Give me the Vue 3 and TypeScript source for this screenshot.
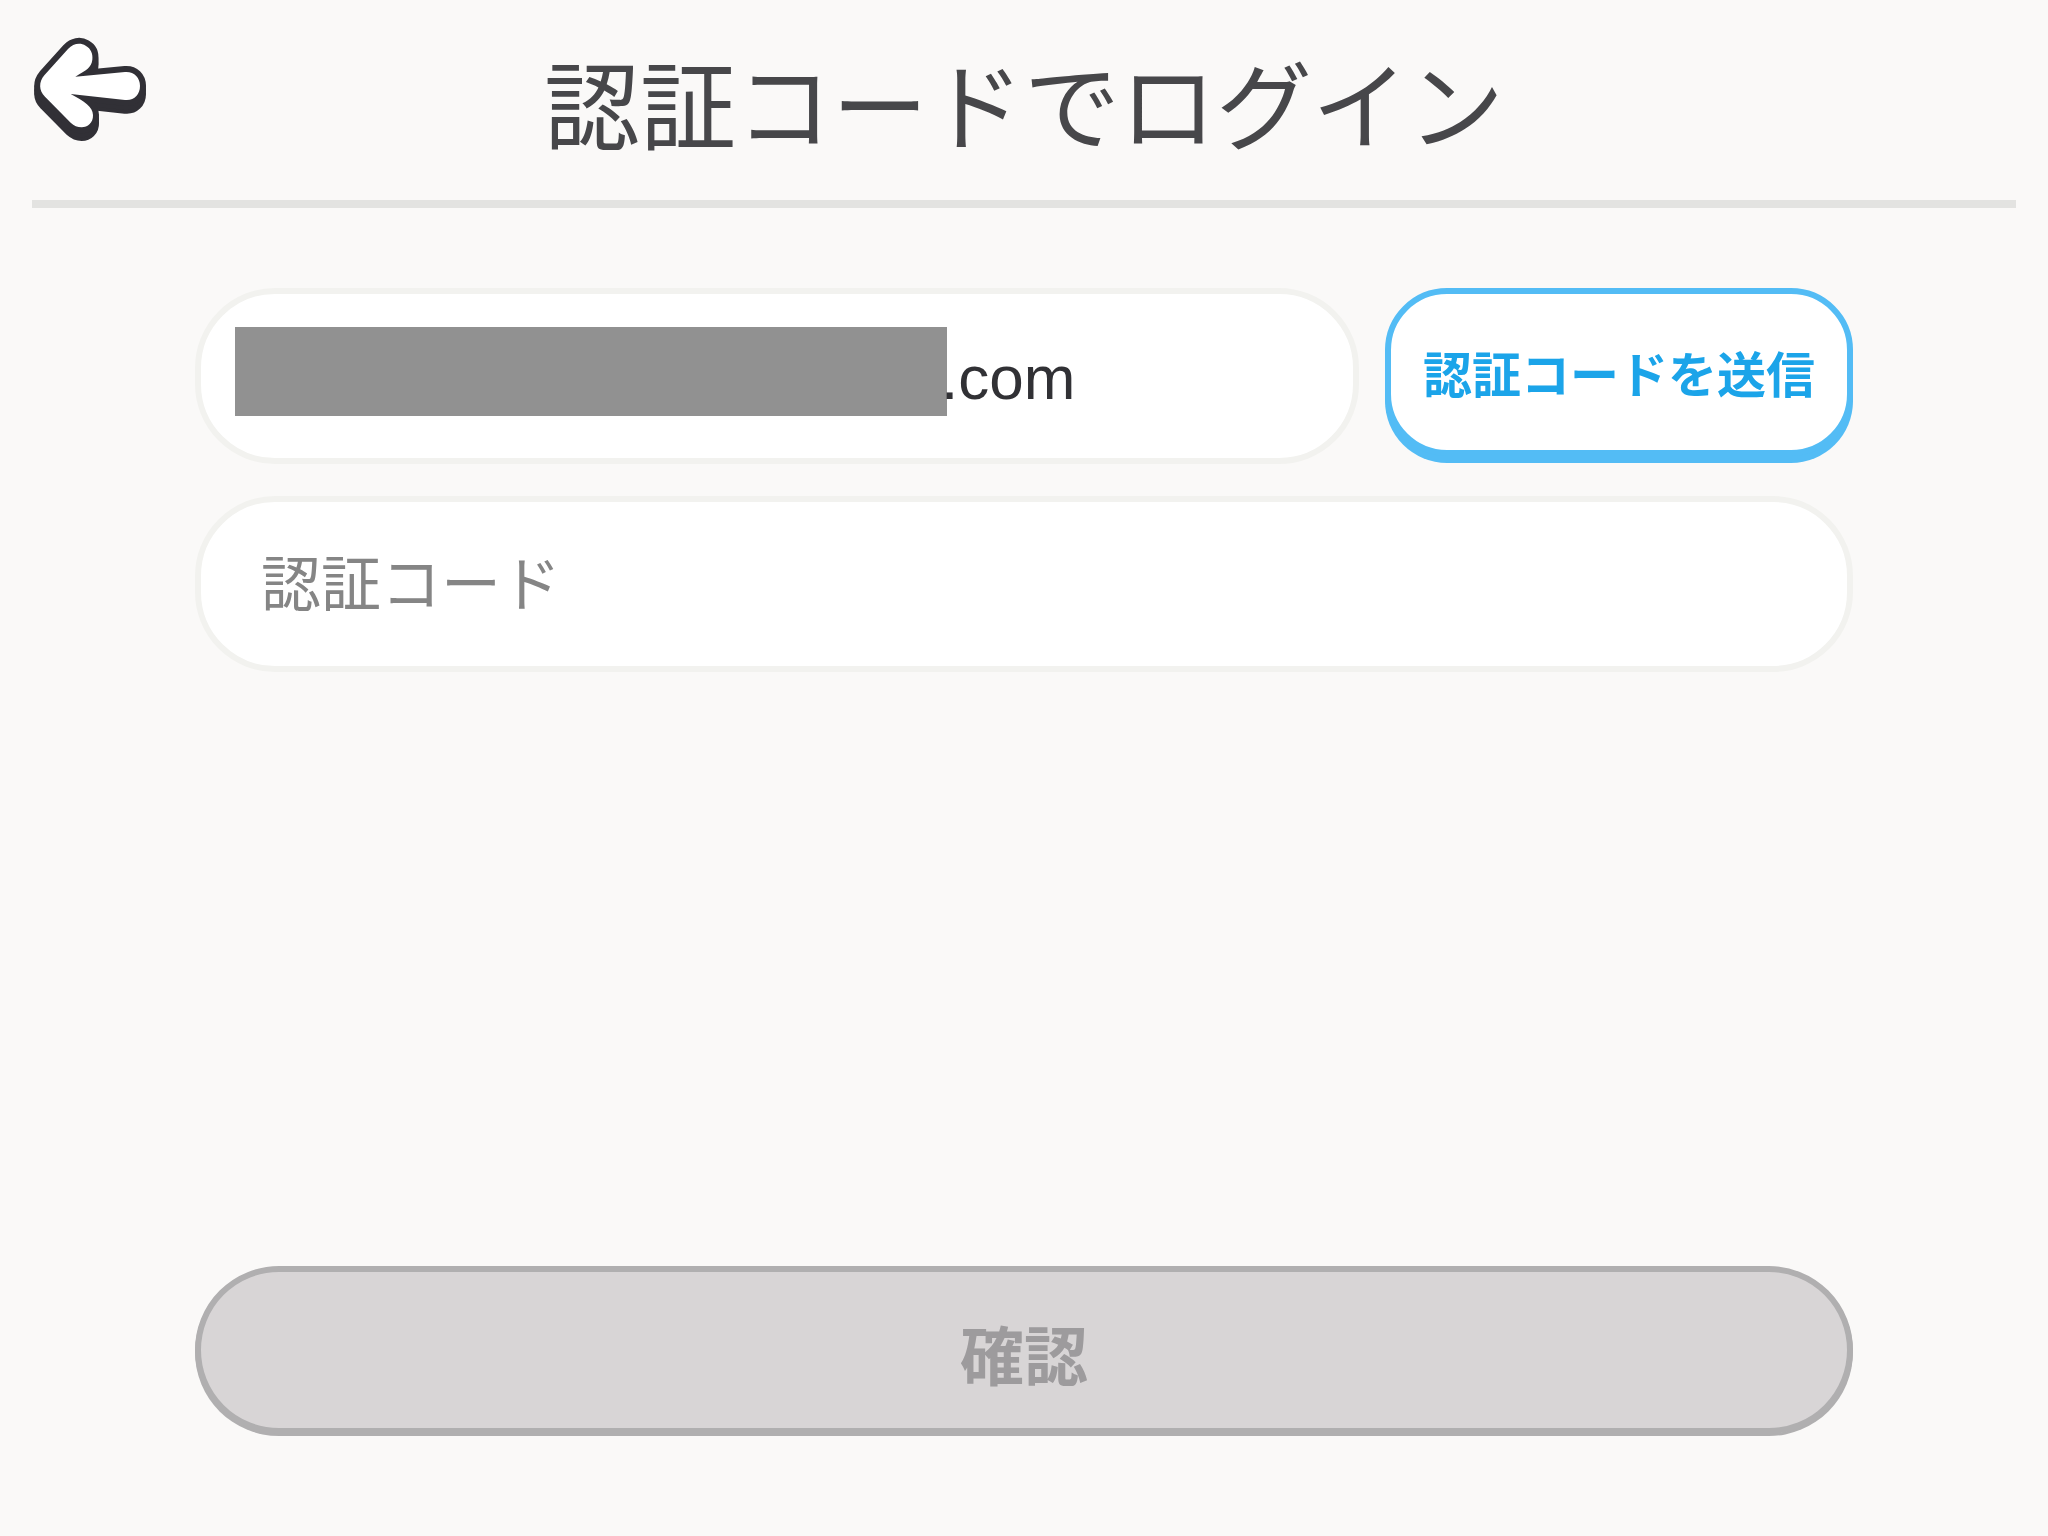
<script setup lang="ts">
import { computed, ref } from 'vue'

const emailDomain = ref('.com')
const code = ref('')
const canConfirm = computed(() => code.value.trim().length > 0)
</script>

<template>
  <div class="page">
    <header class="header">
      <button class="back" type="button" aria-label="戻る">
        <svg class="arrow" viewBox="96 108 348 321" aria-hidden="true">
          <defs>
            <path
              id="arrow-shape"
              d="M204 147C219 131 240 127 257 137C273 146 279 161 277 179C274 203 260 209 226 230L375 216C402 214 420 232 420 258C420 284 402 303 375 300L212 282C254 305 278 320 279 345C280 368 263 382 245 382C232 382 222 377 212 368L135 290C116 272 116 246 133 226Z"
            />
          </defs>
          <use class="arrow-edge" href="#arrow-shape" y="23" />
          <use class="arrow-edge" href="#arrow-shape" y="12" />
          <use class="arrow-edge" href="#arrow-shape" />
          <use class="arrow-face" href="#arrow-shape" />
        </svg>
      </button>
      <h1 class="title">認証コードでログイン</h1>
    </header>

    <form class="form" @submit.prevent>
      <div class="row">
        <label class="field email">
          <span class="mask"></span>
          <input v-model="emailDomain" class="input" type="text" aria-label="メールアドレス" />
        </label>
        <button class="send" type="button">認証コードを送信</button>
      </div>
      <label class="field code">
        <input v-model="code" class="input" type="text" placeholder="認証コード" aria-label="認証コード" />
      </label>
      <button class="confirm" type="submit" :disabled="!canConfirm">確認</button>
    </form>
  </div>
</template>

<style>
body {
  margin: 0;
  background: #faf9f8;
}
</style>

<style scoped>
.page {
  box-sizing: border-box;
  display: flex;
  flex-direction: column;
  min-height: 100vh;
  padding-bottom: 100px;
  background: #faf9f8;
  font-family: "Noto Sans CJK JP", sans-serif;
}

button,
input {
  box-sizing: border-box;
  margin: 0;
  font-family: inherit;
}

.header {
  display: grid;
  grid-template-columns: 116px 1fr 116px;
  align-items: start;
  margin: 0 32px;
  padding: 36px 0 34px;
  border-bottom: 8px solid #e3e3e1;
}

.back {
  padding: 0;
  border: 0;
  background: none;
}

.arrow {
  display: block;
  width: 116px;
  height: 107px;
}

.arrow-edge {
  fill: #313036;
  stroke: #313036;
  stroke-width: 36px;
  stroke-linejoin: round;
}

.arrow-face {
  fill: #ffffff;
}

.title {
  margin: 0;
  color: #47474a;
  font-size: 96px;
  font-weight: 400;
  line-height: 130px;
  text-align: center;
}

.form {
  display: flex;
  flex: 1;
  flex-direction: column;
  gap: 32px;
  padding: 80px 195px 0;
}

.row {
  display: flex;
  align-items: flex-start;
  gap: 26px;
}

.field {
  box-sizing: border-box;
  display: flex;
  align-items: center;
  height: 176px;
  border: 6px solid #f2f2ef;
  border-radius: 80px;
  background: #ffffff;
}

.email {
  flex: 1;
  min-width: 0;
  padding: 0 34px;
}

.code {
  padding: 0 60px;
}

.mask {
  flex: 0 1 712px;
  height: 89px;
  margin: 0 -6px 10px 0;
  background: #919191;
}

.input {
  flex: 1;
  min-width: 0;
  height: 96px;
  padding: 3px 0 0;
  border: 0;
  outline: 0;
  background: transparent;
  color: #313135;
  font-family: "Liberation Sans", "Noto Sans CJK JP", sans-serif;
  font-size: 60px;
}

.email .input {
  font-size: 62px;
}

.input::placeholder {
  color: #858585;
  opacity: 1;
}

.send {
  width: 468px;
  height: 168px;
  padding: 0 0 2px;
  border: 6px solid #53bcf5;
  border-radius: 62px;
  background: #ffffff;
  box-shadow: 0 7px 0 #53bcf5;
  color: #1ba4e9;
  font-size: 49px;
  font-weight: 700;
  white-space: nowrap;
}

.confirm {
  height: 168px;
  margin: auto 0 2px;
  padding: 4px 0 0;
  border: 6px solid #b0afb0;
  border-radius: 84px;
  background: #d8d5d6;
  box-shadow: 0 2px 0 #b0afb0;
  color: #9d9b9d;
  font-size: 64px;
  font-weight: 700;
}
</style>
